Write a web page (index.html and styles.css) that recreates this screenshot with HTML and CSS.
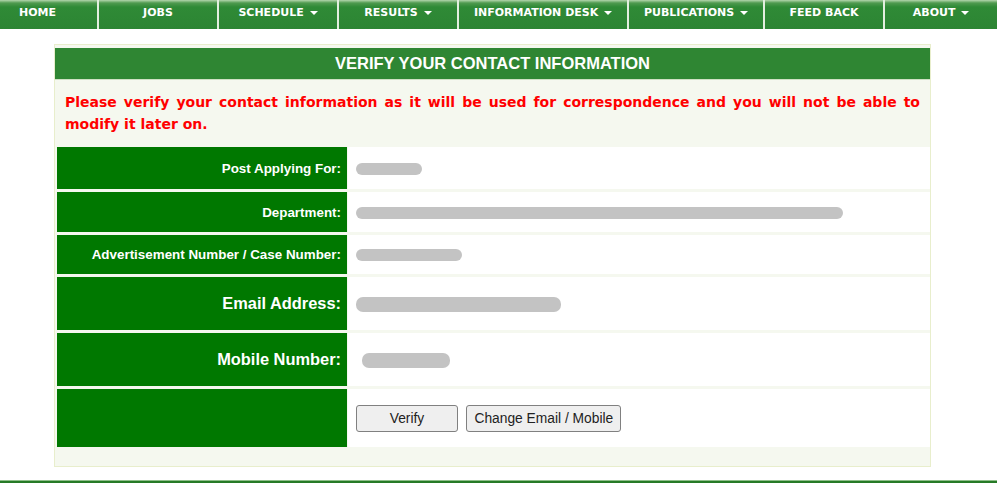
FILE: index.html
```html
<!DOCTYPE html>
<html>
<head>
  <title>Verify Your Contact Information</title>
  <link rel="stylesheet" href="styles.css">
</head>
<body>
  <ul class="nav">
    <li class="first">HOME</li>
    <li>JOBS</li>
    <li>SCHEDULE <span class="caret"></span></li>
    <li>RESULTS <span class="caret"></span></li>
    <li class="wide">INFORMATION DESK <span class="caret"></span></li>
    <li class="pub">PUBLICATIONS <span class="caret"></span></li>
    <li>FEED BACK</li>
    <li class="last">ABOUT <span class="caret"></span></li>
  </ul>

  <div class="box">
    <div class="box-title">VERIFY YOUR CONTACT INFORMATION</div>
    <p class="warning">Please verify your contact information as it will be used for correspondence and you will not be able to modify it later on.</p>

    <table class="info">
      <tr class="r1">
        <th>Post Applying For:</th>
        <td><span class="hidden" style="width:66px"></span></td>
      </tr>
      <tr class="r2">
        <th>Department:</th>
        <td><span class="hidden" style="width:487px"></span></td>
      </tr>
      <tr class="r3">
        <th>Advertisement Number / Case Number:</th>
        <td><span class="hidden" style="width:106px"></span></td>
      </tr>
      <tr class="r4">
        <th class="big">Email Address:</th>
        <td><span class="hidden tall" style="width:205px"></span></td>
      </tr>
      <tr class="r5">
        <th class="big">Mobile Number:</th>
        <td><span class="hidden tall" style="width:88px; margin-left:6px"></span></td>
      </tr>
      <tr class="r6">
        <th></th>
        <td>
          <button class="btn verify">Verify</button>
          <button class="btn">Change Email / Mobile</button>
        </td>
      </tr>
    </table>
  </div>

  <div class="footer-bar"></div>
</body>
</html>
```

FILE: styles.css
```css
body {
  margin: 0;
  font-family: "Liberation Sans", Arial, sans-serif;
  background: #fff;
}
.nav {
  list-style: none;
  margin: 0;
  padding: 0;
  display: flex;
  height: 29px;
  background: linear-gradient(#b4d6ad 0, #4f9a4f 3px, #2f8a36 7px, #2c8533 100%);
}
.nav li {
  width: 118px;
  border-right: 2px solid #e3efdf;
  color: #fff;
  font-family: "DejaVu Sans", Verdana, sans-serif;
  font-weight: bold;
  font-size: 11px;
  text-align: center;
  line-height: 26px;
  white-space: nowrap;
}
.nav li.first {
  width: 97px;
  text-indent: -22px;
}
.nav li.wide {
  width: 168px;
}
.nav li.pub {
  width: 134px;
}
.nav li.last {
  flex: 1;
  border-right: none;
}
.caret {
  display: inline-block;
  width: 0;
  height: 0;
  border-left: 4px solid transparent;
  border-right: 4px solid transparent;
  border-top: 4px solid #fff;
  vertical-align: middle;
  margin-left: 2px;
}
.box {
  margin: 15px 0 0 54px;
  width: 875px;
  border: 1px solid #e8eecc;
  background: #f5f8ef;
  padding: 3px 0 16px;
}
.box-title {
  background: #2f8633;
  color: #fff;
  font-weight: bold;
  font-size: 16.5px;
  text-align: center;
  height: 31px;
  line-height: 31px;
  border-bottom: 1px solid #cfe0c4;
}
.warning {
  margin: 11px 10px 0 10px;
  color: #ff0000;
  font-family: "DejaVu Sans", Verdana, sans-serif;
  font-weight: bold;
  font-size: 14px;
  line-height: 22px;
  text-align: justify;
}
.info {
  margin: 9px 0 0 1px;
  width: 875px;
  border-collapse: separate;
  border-spacing: 1px 3px;
}
.info th {
  width: 280px;
  background: #007800;
  color: #fff;
  font-size: 13.4px;
  font-weight: bold;
  text-align: right;
  padding: 0 6px 0 4px;
}
.info th.big {
  font-size: 16.4px;
}
.info td {
  background: #fff;
  padding: 0 8px;
}
.r1 { height: 42px; }
.r2 { height: 40px; }
.r3 { height: 39px; }
.r4 { height: 53px; }
.r5 { height: 53px; }
.r6 { height: 58px; }
.hidden {
  display: inline-block;
  height: 12px;
  background: #c3c3c3;
  border-radius: 6px;
  vertical-align: middle;
}
.hidden.tall {
  height: 15px;
  border-radius: 7px;
}
.btn {
  font-family: "Liberation Sans", Arial, sans-serif;
  font-size: 13.8px;
  color: #222;
  background: #efefef;
  border: 1px solid #808080;
  border-radius: 3px;
  height: 27px;
  padding: 0 7px;
  margin-right: 4px;
}
.btn.verify {
  width: 102px;
}
.footer-bar {
  margin-top: 13px;
  height: 5px;
  border-top: 1px solid #8fbf8a;
  background: #267a26;
}
```
